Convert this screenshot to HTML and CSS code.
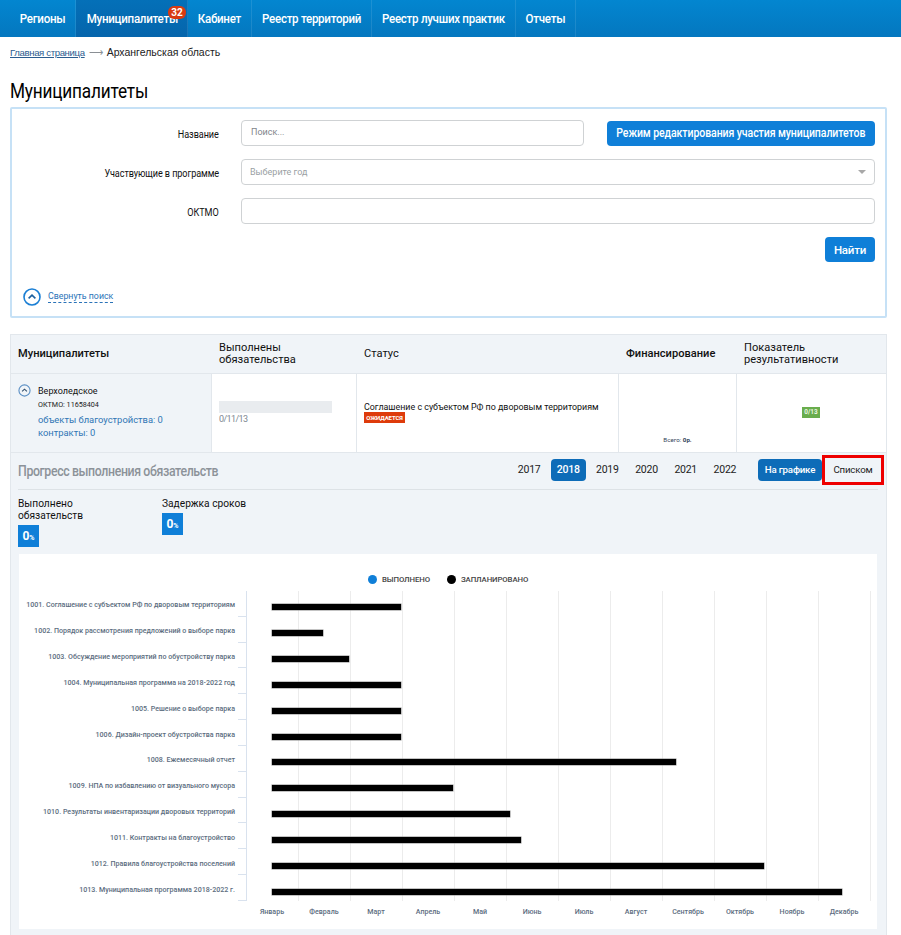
FILE: index.html
```html
<!DOCTYPE html>
<html lang="ru">
<head>
<meta charset="utf-8">
<title>Муниципалитеты</title>
<link rel="stylesheet" href="styles.css">
</head>
<body>
<nav class="nav">
  <a class="nav-item w-reg"><span class="cond">Регионы</span></a>
  <a class="nav-item w-mun active"><span class="cond">Муниципалитеты</span><span class="badge">32</span></a>
  <a class="nav-item w-cab"><span class="cond">Кабинет</span></a>
  <a class="nav-item w-ter"><span class="cond">Реестр территорий</span></a>
  <a class="nav-item w-pra"><span class="cond">Реестр лучших практик</span></a>
  <a class="nav-item w-rep"><span class="cond">Отчеты</span></a>
</nav>
<div class="crumbs"><a class="crumb-link">Главная страница</a><span class="crumb-arrow">⟶</span><span class="crumb-cur">Архангельская область</span></div>
<h1 class="title"><span class="cond-title">Муниципалитеты</span></h1>
<section class="search">
  <div class="form-row row-a">
    <label class="lbl"><span class="cond-right">Название</span></label>
    <div class="field field-short"><span class="ph ph-a">Поиск...</span></div>
    <button class="btn btn-edit"><span class="cond-btn">Режим редактирования участия муниципалитетов</span></button>
  </div>
  <div class="form-row row-b">
    <label class="lbl"><span class="cond-right">Участвующие в программе</span></label>
    <div class="field field-sel"><span class="ph">Выберите год</span><span class="caret"></span></div>
  </div>
  <div class="form-row row-c">
    <label class="lbl"><span class="cond-right">ОКТМО</span></label>
    <div class="field"></div>
  </div>
  <div class="find-row"><button class="btn btn-find">Найти</button></div>
  <div class="collapse">
    <svg class="ico-up" viewBox="0 0 18 18" width="18" height="18"><circle cx="9" cy="9" r="8" fill="none" stroke="#1b7fd4" stroke-width="1.6"/><path d="M5.6 10.4 9 7.2l3.4 3.2" fill="none" stroke="#1b5f9e" stroke-width="1.6"/></svg>
    <a class="dash-link">Свернуть поиск</a>
  </div>
</section>
<section class="panel">
  <div class="thead">
    <div class="th th-strong">Муниципалитеты</div>
    <div class="th">Выполнены<br>обязательства</div>
    <div class="th">Статус</div>
    <div class="th th-strong">Финансирование</div>
    <div class="th">Показатель<br>результативности</div>
  </div>
  <div class="trow">
    <div class="td td-name">
      <svg class="ico-small" viewBox="0 0 14 14" width="13" height="13"><circle cx="7" cy="7" r="6" fill="none" stroke="#5b8fc4" stroke-width="1.2"/><path d="M4.4 8 7 5.6 9.6 8" fill="none" stroke="#33506e" stroke-width="1.2"/></svg>
      <div class="name-col">
        <div class="mun-name">Верхоледское</div>
        <div class="oktmo">ОКТМО: 11658404</div>
        <div class="blue-line first">объекты благоустройства: 0</div>
        <div class="blue-line">контракты: 0</div>
      </div>
    </div>
    <div class="td td-prog"><div class="progress"></div><div class="prog-num">0/11/13</div></div>
    <div class="td td-status"><div class="status-text">Соглашение с субъектом РФ по дворовым территориям</div><span class="tag-wait">ОЖИДАЕТСЯ</span></div>
    <div class="td td-fin"><span class="fin-lbl">Всего: <b>0р.</b></span></div>
    <div class="td td-res"><span class="tag-ok">0/13</span></div>
  </div>
  <div class="progress-head">
    <div class="ph-title"><span class="cond-left">Прогресс выполнения обязательств</span></div>
    <div class="years">
      <span class="year">2017</span><span class="year year-on">2018</span><span class="year">2019</span><span class="year">2020</span><span class="year">2021</span><span class="year">2022</span>
    </div>
    <span class="view view-on">На графике</span>
    <span class="view view-list">Списком</span>
  </div>
  <div class="stats">
    <div class="stat stat-a"><div class="stat-lbl">Выполнено<br>обязательств</div><div class="stat-box">0<small>%</small></div></div>
    <div class="stat"><div class="stat-lbl">Задержка сроков</div><div class="stat-box">0<small>%</small></div></div>
  </div>
  <div class="chart">
    <div class="legend">
      <span class="leg"><i class="dot dot-blue"></i>ВЫПОЛНЕНО</span>
      <span class="leg"><i class="dot dot-black"></i>ЗАПЛАНИРОВАНО</span>
    </div>
    <div class="plot">
      <div class="labels">
        <div class="c-label">1001. Соглашение с субъектом РФ по дворовым территориям</div>
        <div class="c-label">1002. Порядок рассмотрения предложений о выборе парка</div>
        <div class="c-label">1003. Обсуждение мероприятий по обустройству парка</div>
        <div class="c-label">1004. Муниципальная программа на 2018-2022 год</div>
        <div class="c-label">1005. Решение о выборе парка</div>
        <div class="c-label">1006. Дизайн-проект обустройства парка</div>
        <div class="c-label">1008. Ежемесячный отчет</div>
        <div class="c-label">1009. НПА по избавлению от визуального мусора</div>
        <div class="c-label">1010. Результаты инвентаризации дворовых территорий</div>
        <div class="c-label">1011. Контракты на благоустройство</div>
        <div class="c-label">1012. Правила благоустройства поселений</div>
        <div class="c-label">1013. Муниципальная программа 2018-2022 г.</div>
      </div>
      <div class="tracks">
        <div class="track"><div class="bar" style="width:129px"></div></div>
        <div class="track"><div class="bar" style="width:51px"></div></div>
        <div class="track"><div class="bar" style="width:77px"></div></div>
        <div class="track"><div class="bar" style="width:129px"></div></div>
        <div class="track"><div class="bar" style="width:129px"></div></div>
        <div class="track"><div class="bar" style="width:129px"></div></div>
        <div class="track"><div class="bar" style="width:404px"></div></div>
        <div class="track"><div class="bar" style="width:181px"></div></div>
        <div class="track"><div class="bar" style="width:238px"></div></div>
        <div class="track"><div class="bar" style="width:249px"></div></div>
        <div class="track"><div class="bar" style="width:492px"></div></div>
        <div class="track"><div class="bar" style="width:570px"></div></div>
      </div>
    </div>
    <div class="months">
      <span>Январь</span><span>Февраль</span><span>Март</span><span>Апрель</span><span>Май</span><span>Июнь</span><span>Июль</span><span>Август</span><span>Сентябрь</span><span>Октябрь</span><span>Ноябрь</span><span>Декабрь</span>
    </div>
  </div>
</section>
</body>
</html>
```
FILE: styles.css
```css
* { box-sizing: border-box; }
html, body { margin: 0; padding: 0; height: 935px; overflow: hidden; }
body { background: #fff; color: #000; font-family: Roboto, "Liberation Sans", sans-serif; width: 901px; }

/* horizontally narrowed text: the reference uses a condensed face */
.cond, .cond-left, .cond-right, .cond-btn, .cond-title { display: inline-block; white-space: nowrap; }
.cond { transform: scaleX(.925); }
.cond-left { transform: scaleX(.88); transform-origin: left center; }
.cond-title { transform: scaleX(.86); transform-origin: left center; }
.cond-right { transform: scaleX(.79); transform-origin: right center; }
.cond-btn { transform: scaleX(.878); }

/* nav */
.nav { display: flex; height: 37px; padding-left: 10px; background: linear-gradient(#0386d0, #0477bf); }
.nav-item { position: relative; display: flex; align-items: center; justify-content: center; color: #fff; font-size: 12.5px; font-weight: 500; letter-spacing: -0.3px; border-right: 1px solid rgba(255,255,255,.1); white-space: nowrap; }
.w-reg { width: 66px; }
.w-mun { width: 112px; padding-left: 1px; }
.w-cab { width: 64px; }
.w-ter { width: 120px; }
.w-pra { width: 144px; }
.w-rep { width: 60px; }
.active { background: linear-gradient(#0470b8, #0565ac); }
.badge { position: absolute; left: 92px; top: 6px; width: 18px; height: 13px; border-radius: 6px; background: #d83a12; color: #fff; font-size: 10px; font-weight: 700; letter-spacing: 0; line-height: 13px; text-align: center; }

/* crumbs */
.crumbs { display: flex; align-items: center; height: 16px; margin: 7px 0 0 10px; font-family: "Liberation Sans", sans-serif; }
.crumb-link { color: #2b5c8f; font-size: 9.6px; letter-spacing: -0.37px; text-decoration: underline; }
.crumb-arrow { width: 22px; text-align: center; color: #8a8f94; font-size: 10px; }
.crumb-cur { color: #222; font-size: 10.5px; }
.title { margin: 20px 0 0 10px; height: 24px; font-size: 20px; line-height: 23px; font-weight: 400; letter-spacing: -0.2px; }

/* search */
.search { margin: 3px 14px 0 10px; width: 877px; height: 211px; border: 2px solid #c6e1f6; padding: 11px 10px 0 0; border-radius: 2px; }
.form-row { display: grid; grid-template-columns: 207px 1fr; column-gap: 22px; align-items: center; }
.row-a { grid-template-columns: 207px 343px 268px; column-gap: 22px; height: 26px; }
.row-a .btn-edit { margin-left: 1px; }
.row-b { height: 26px; margin-top: 13px; }
.row-c { height: 26px; margin-top: 13px; }
.lbl { text-align: right; font-size: 11.5px; letter-spacing: -0.1px; color: #111; padding-top: 2px; }
.field { position: relative; height: 26px; border: 1px solid #cfd2d4; border-radius: 4px; background: #fff; display: flex; align-items: center; padding-left: 8px; }
.ph { font-size: 9px; color: #9a9fa4; }
.ph-a { padding-left: 1px; color: #7f858b; position: relative; top: -1px; }
.caret { margin-left: auto; margin-right: 8px; width: 0; height: 0; border-left: 4px solid transparent; border-right: 4px solid transparent; border-top: 4px solid #a8a8a8; }
.btn { border: 0; border-radius: 4px; background: #0f7fd8; color: #fff; font-family: inherit; font-size: 12px; font-weight: 500; letter-spacing: -0.1px; padding: 0; white-space: nowrap; }
.btn-edit { height: 25px; width: 268px; display: flex; align-items: center; justify-content: center; overflow: hidden; }
.find-row { display: flex; justify-content: flex-end; margin-top: 13px; }
.btn-find { width: 50px; height: 25px; font-size: 11.5px; letter-spacing: -0.2px; }
.collapse { display: flex; align-items: center; gap: 7px; margin: 26px 0 0 11px; }
.ico-up { display: block; }
.dash-link { color: #2a73b8; font-size: 8.8px; border-bottom: 1px dashed #2a73b8; line-height: 11px; }

/* panel */
.panel { margin: 16px 0 0 10px; width: 877px; height: 620px; background: #f0f4f8; border: 1px solid #e2e7ec; border-bottom: 0; }
.thead, .trow { display: grid; grid-template-columns: 200px 145px 262px 118px 150px; }
.thead { height: 39px; border-bottom: 1px solid #e2e7ec; }
.th { display: flex; align-items: center; padding: 0 7px; font-size: 11.1px; line-height: 12.5px; color: #111; }
.th:nth-child(2), .th:nth-child(3), .th:nth-child(4), .th:nth-child(5) { padding-left: 8px; }
.th-strong { font-weight: 500; }
.trow { height: 79px; border-bottom: 1px solid #e2e7ec; }
.td { background: #fff; border-left: 1px solid #e2e7ec; }
.td-name { background: #f0f4f8; border-left: 0; display: flex; gap: 7px; padding: 10px 0 0 7px; }
.name-col { display: flex; flex-direction: column; padding-top: 1px; }
.ico-small { display: block; flex: none; }
.mun-name { font-size: 9px; line-height: 13px; color: #111; }
.oktmo { font-size: 7.2px; line-height: 13px; color: #222; }
.blue-line { font-size: 9.4px; line-height: 13px; color: #2f74b5; }
.blue-line.first { margin-top: 2px; }
.td-prog { padding: 27px 0 0 7px; }
.progress { width: 113px; height: 12px; background: #e9ecef; }
.prog-num { font-size: 9px; letter-spacing: -0.6px; line-height: 12px; color: #7d8790; }
.td-status { padding: 27px 0 0 7px; }
.status-text { font-size: 8.9px; line-height: 13px; color: #111; }
.tag-wait { display: block; width: 41px; height: 11px; margin-top: -2px; background: #de3b0b; color: #fff; font-size: 6px; font-weight: 700; line-height: 11px; text-align: center; letter-spacing: -0.1px; }
.td-fin { display: flex; justify-content: center; align-items: flex-end; padding-bottom: 8px; }
.fin-lbl { font-size: 6.2px; line-height: 8px; color: #33455a; }
.td-res { display: flex; justify-content: center; align-items: flex-start; padding-top: 33px; padding-right: 1px; }
.tag-ok { width: 18px; height: 11px; background: #69ad4d; color: #e9f5e2; font-size: 6.4px; font-weight: 700; line-height: 11px; text-align: center; }

/* progress head */
.progress-head { display: flex; align-items: center; height: 37px; margin: 0 8px 0 7px; border-bottom: 1px solid #dde2e6; position: relative; }
.ph-title { font-size: 14px; font-weight: 500; letter-spacing: -0.42px; color: #8c9299; margin-right: auto; }
.years { display: flex; margin-right: 13.5px; position: relative; top: -1px; }
.year { width: 39.2px; height: 22px; line-height: 22px; text-align: center; font-size: 10.5px; letter-spacing: -0.25px; color: #222; border-radius: 4px; }
.year-on { width: 35px; margin: 0 2px; background: #0d6cb8; color: #fff; font-weight: 500; }
.view { height: 22px; line-height: 22px; font-size: 9.7px; letter-spacing: -0.2px; text-align: center; position: relative; top: -1px; }
.view-on { width: 64px; background: #0d6cb8; color: #fff; font-weight: 500; border-radius: 4px; }
.view-list { width: 62px; height: 30px; line-height: 24px; border: 3px solid #ee0000; color: #222; margin-right: -6px; }

.stats { display: flex; padding: 8px 0 0 7px; height: 64px; }
.stat-a { width: 144px; }
.stat-lbl { font-size: 10.2px; line-height: 12px; color: #111; }
.stat-box { width: 21px; height: 22px; margin-top: 3px; background: #0f7fd8; color: #fff; font-size: 12px; font-weight: 700; line-height: 22px; text-align: center; }
.stat-box small { font-size: 7px; }

/* chart */
.chart { margin: 0 9px 0 8px; height: 375px; background: #fff; }
.legend { display: flex; gap: 17px; height: 37px; padding: 20px 0 0 349px; }
.leg { display: flex; align-items: center; gap: 5px; height: 10px; font-size: 7.8px; font-weight: 500; letter-spacing: -0.1px; color: #444; }
.dot { width: 9px; height: 9px; border-radius: 50%; }
.dot-blue { background: #0f7fd8; }
.dot-black { background: #000; }
.plot { display: grid; grid-template-columns: 227px 625px; height: 310px; }
.labels { display: grid; grid-auto-rows: 25.83px; }
.c-label { display: flex; align-items: center; justify-content: flex-end; padding-right: 11px; padding-top: 2px; font-size: 7.1px; font-weight: 500; color: #5c6d80; background: linear-gradient(#d9e2ee, #d9e2ee) right bottom / 8px 1px no-repeat; white-space: nowrap; }
.tracks { display: grid; grid-auto-rows: 25.83px; border-left: 1px solid #d9e2ee; background: repeating-linear-gradient(90deg, transparent 0, transparent 51px, #ececec 51px, #ececec 52px); }
.track { display: flex; align-items: center; padding: 7px 0 0 25px; }
.bar { height: 6px; background: #000; box-shadow: 0 0 0 .5px #888; }
.months { display: grid; grid-template-columns: repeat(12, 52px); padding: 5px 0 0 227px; }
.months span { text-align: center; font-size: 7.1px; font-weight: 500; line-height: 12px; color: #5c6d80; }
```
